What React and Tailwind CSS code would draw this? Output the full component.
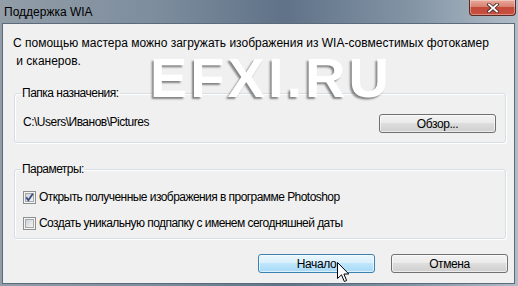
import React from 'react';

function CheckBox({ checked }) {
  return (
    <svg width="13" height="13" viewBox="0 0 13 13" className="shrink-0">
      <defs>
        <linearGradient id={checked ? 'cbA' : 'cbB'} x1="0" y1="0" x2="1" y2="1">
          <stop offset="0%" stopColor="#cbcfd5" />
          <stop offset="100%" stopColor="#f6f6f6" />
        </linearGradient>
      </defs>
      <rect x="0.5" y="0.5" width="12" height="12" fill="#f4f4f4" stroke="#8e8f8f" />
      <rect x="2.5" y="2.5" width="8" height="8" fill={`url(#${checked ? 'cbA' : 'cbB'})`} stroke="#a7a9ad" strokeWidth="1" />
      {checked && (
        <path d="M3.2 6.4 L5.4 9.2 L9.8 2.8" fill="none" stroke="#3c4f84" strokeWidth="1.8" />
      )}
    </svg>
  );
}

function Button({ children, hot }) {
  return (
    <button
      className={
        hot
          ? 'w-[117px] h-[19px] rounded-[3px] border border-[#3c7fb1] bg-[linear-gradient(#eaf6fd_0%,#d9f0fc_45%,#bee6fd_50%,#a7d9f5_100%)] shadow-[inset_0_0_0_1px_rgba(255,255,255,0.6)] text-[12px] leading-[16px] tracking-[-0.4px] text-black'
          : 'w-[117px] h-[19px] rounded-[3px] border border-[#707070] bg-[linear-gradient(#f2f2f2_0%,#ebebeb_45%,#dddddd_50%,#cfcfcf_100%)] shadow-[inset_0_0_0_1px_rgba(255,255,255,0.6)] text-[12px] leading-[16px] tracking-[-0.4px] text-black'
      }
    >
      {children}
    </button>
  );
}

export default function App() {
  return (
    <div className="relative w-[518px] h-[286px] overflow-hidden bg-[linear-gradient(90deg,#929da7_0%,#7d8d9e_30%,#5f7287_55%,#8495a6_80%,#b1bcc6_100%)] font-['Liberation_Sans',Arial,sans-serif] text-[12px] text-black">
      {/* title bar */}
      <div className="h-[23px] flex items-center pl-[4px] text-[12px] text-black">
        Поддержка WIA
      </div>

      {/* close button */}
      <div className="absolute left-[469px] top-0 w-[47px] h-[16px] rounded-b-[4px] border border-t-0 border-[#5b2a24] bg-[linear-gradient(#e9a99b_0%,#d88171_45%,#c34a3b_50%,#c9503e_100%)] shadow-[inset_0_0_0_1px_rgba(255,255,255,0.35)] flex items-center justify-center">
        <svg width="12" height="10" viewBox="0 0 12 10">
          <path d="M2 1.5 L10 8.5 M10 1.5 L2 8.5" stroke="#4a2a28" strokeWidth="3.6" strokeLinecap="square" />
          <path d="M2 1.5 L10 8.5 M10 1.5 L2 8.5" stroke="#ffffff" strokeWidth="1.8" strokeLinecap="square" />
        </svg>
      </div>

      {/* client area */}
      <div className="ml-[2px] mr-[3px] h-[261px] border border-[#5c6b7b] bg-[#f0f0f0] pl-[10px] pr-[8px] pt-[10px] flex flex-col">
        <p className="leading-[18px]">
          С помощью мастера можно загружать изображения из WIA-совместимых фотокамер
          <br />&nbsp;и сканеров.
        </p>

        <fieldset className="mt-[15px] ml-[1px] border border-[#d5dfe5] rounded-[3px] shadow-[inset_1px_1px_0_#ffffff,1px_1px_0_#ffffff] pl-[8px] pr-[9px] pt-[13px] pb-[9px] tracking-[-0.5px]">
          <legend className="-ml-[2px] px-[1px] leading-[16px]">Папка назначения:</legend>
          <div className="flex items-center justify-between">
            <span className="leading-[16px] -mt-[3px]">C:\Users\Иванов\Pictures</span>
            <Button>Обзор...</Button>
          </div>
        </fieldset>

        <fieldset className="mt-[18px] ml-[1px] border border-[#d5dfe5] rounded-[3px] shadow-[inset_1px_1px_0_#ffffff,1px_1px_0_#ffffff] pl-[8px] pr-[9px] pt-[12px] pb-[7px] tracking-[-0.55px]">
          <legend className="-ml-[2px] px-[1px] leading-[16px]">Параметры:</legend>
          <div className="flex flex-col gap-[10px]">
            <label className="flex items-center gap-[3px] leading-[16px]">
              <CheckBox checked />
              <span>Открыть полученные изображения в программе Photoshop</span>
            </label>
            <label className="flex items-center gap-[3px] leading-[16px]">
              <CheckBox />
              <span>Создать уникальную подпапку с именем сегодняшней даты</span>
            </label>
          </div>
        </fieldset>

        <div className="mt-[15px] -mr-[2px] flex justify-end gap-[16px]">
          <Button hot>Начало</Button>
          <Button>Отмена</Button>
        </div>
      </div>

      {/* watermark */}
      <div className="absolute left-[150px] top-[46px] font-['Liberation_Sans',Arial,sans-serif] font-bold text-[56px] leading-[64px] tracking-[3px] text-white [text-shadow:-2px_2px_2px_rgba(0,0,0,0.45)] pointer-events-none">
        EFXI.RU
      </div>

      {/* mouse cursor */}
      <svg className="absolute left-[337px] top-[262px]" width="13" height="21" viewBox="0 0 13 21">
        <path d="M0.5 0.5 L0.5 16.5 L4.5 12.8 L7.3 19.5 L9.6 18.5 L6.9 12 L11.8 12 Z" fill="#ffffff" stroke="#000000" strokeWidth="1" strokeLinejoin="miter" />
      </svg>
    </div>
  );
}
